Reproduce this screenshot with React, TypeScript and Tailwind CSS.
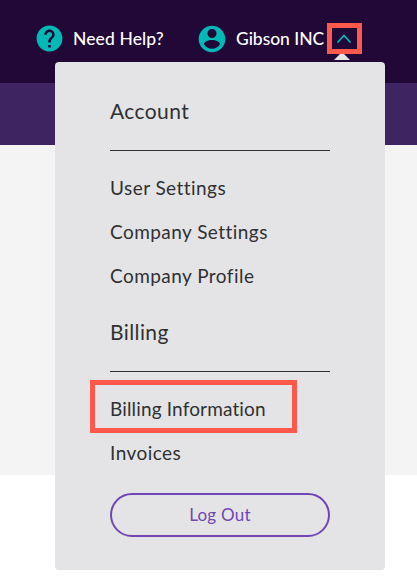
const HelpIcon = () => (
  <svg className="h-[31px] w-[31px]" viewBox="0 0 24 24" fill="#00b8b4">
    <path d="M12 2C6.48 2 2 6.48 2 12s4.48 10 10 10 10-4.48 10-10S17.52 2 12 2zm1 17h-2v-2h2v2zm2.07-7.75l-.9.92C13.45 12.9 13 13.5 13 15h-2v-.5c0-1.1.45-2.1 1.17-2.83l1.24-1.26c.37-.36.59-.86.59-1.41 0-1.1-.9-2-2-2s-2 .9-2 2H8c0-2.21 1.79-4 4-4s4 1.79 4 4c0 .88-.36 1.68-.93 2.25z" />
  </svg>
);

const UserIcon = () => (
  <svg className="h-8 w-8" viewBox="0 0 24 24" fill="#00b8b4">
    <path d="M12 2C6.48 2 2 6.48 2 12s4.48 10 10 10 10-4.48 10-10S17.52 2 12 2zm0 2.5c1.88 0 3.4 1.52 3.4 3.4s-1.52 3.4-3.4 3.4-3.4-1.52-3.4-3.4 1.52-3.4 3.4-3.4zm0 14.9c-2.5 0-4.71-1.28-6-3.42.03-1.99 3.2-3.28 6-3.28s5.97 1.29 6 3.28c-1.29 2.14-3.5 3.42-6 3.42z" />
  </svg>
);

const Heading = ({ children }: { children: React.ReactNode }) => (
  <h2 className="h-[50px] border-b border-[#303033] text-[21px] leading-5 font-normal tracking-[0.4px]">
    {children}
  </h2>
);

const accountLinks = ["User Settings", "Company Settings", "Company Profile"];

export default function App() {
  return (
    <div className="relative h-[581px] w-[417px] overflow-hidden bg-white font-['Lato',sans-serif] [font-variant-ligatures:none]">
      <header className="h-[83px] bg-[#220837] pt-[23px]">
        <div className="flex h-[31px] items-center text-[17.5px] font-medium text-white">
          <div className="ml-[33.5px] flex w-[162.5px] items-center">
            <HelpIcon />
            <span className="ml-[8.5px] pt-0.5 tracking-[0.1px] whitespace-nowrap">Need Help?</span>
          </div>
          <div className="flex items-center">
            <UserIcon />
            <span className="ml-[8px] w-[91px] pt-0.5 tracking-[-0.05px] whitespace-nowrap">Gibson INC</span>
          </div>
          <button className="flex h-[31px] w-[35px] items-center justify-center border-5 border-[#ff594b]">
            <svg className="h-[21px] w-[25px]" viewBox="0 0 25 21" fill="none" stroke="#00b8b4" strokeWidth="1.8">
              <path d="M5.5 14.5 12 7.5 18.5 14.5" />
            </svg>
          </button>
        </div>
      </header>
      <div className="h-[62px] bg-[#3e2461]" />
      <div className="h-[330px] bg-[#f4f4f4]" />

      <svg className="absolute top-[54px] left-[334px] h-[6px] w-[16px]" viewBox="0 0 16 6" fill="#e4e4e6">
        <path d="M6 0h4l6 6H0z" />
      </svg>

      <nav className="absolute top-[62px] left-[55px] h-[508px] w-[330px] rounded-[4px] bg-[#e4e4e6] px-[55px] pt-[39px] text-[19px] text-[#303033]">
        <Heading>Account</Heading>
        <ul className="mt-[25px] tracking-[0.45px]">
          {accountLinks.map((link) => (
            <li key={link} className="h-11 leading-6 whitespace-nowrap">
              {link}
            </li>
          ))}
        </ul>
        <div className="mt-[14px]">
          <Heading>Billing</Heading>
        </div>
        <div className="mt-[8px] -ml-5 flex h-[53px] w-[207px] items-center border-5 border-[#ff594b] pt-[6px] pl-[15px] tracking-[0.15px] whitespace-nowrap">
          Billing Information
        </div>
        <div className="mt-[8px] leading-6 tracking-[0.45px]">Invoices</div>
        <button className="mt-[28px] block h-11 w-[220px] rounded-full border-2 border-[#7046b4] text-[17px] tracking-[0.25px] text-[#7046b4]">
          Log Out
        </button>
      </nav>
    </div>
  );
}
